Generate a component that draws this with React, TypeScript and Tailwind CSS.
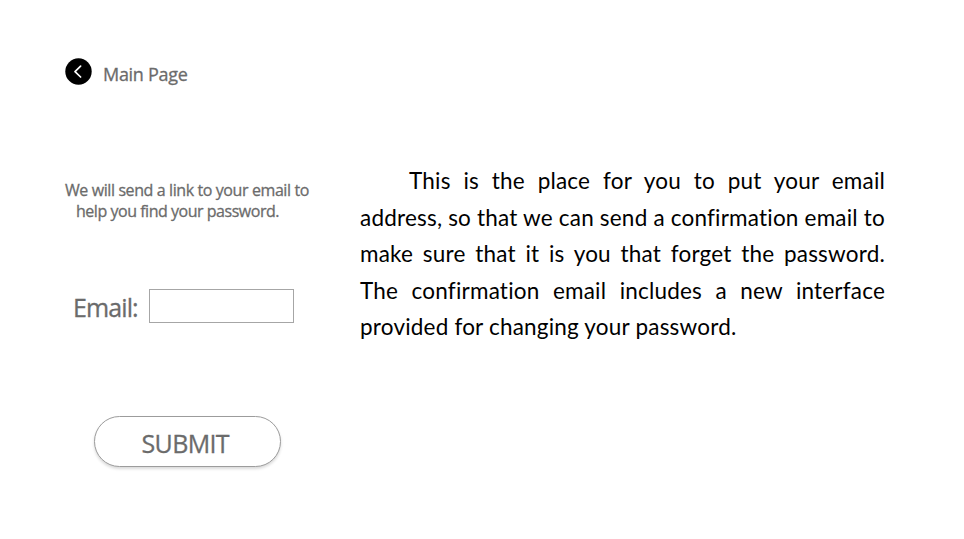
import React from "react";

const Line = ({ children, className = "" }: { children: React.ReactNode; className?: string }) => (
  <span className={`block whitespace-nowrap [text-align-last:justify] ${className}`}>{children}</span>
);

export default function App() {
  return (
    <main className="flex h-[539px] w-[964px] overflow-hidden bg-white">
      <section className="w-[360px] shrink-0 pt-[58px] font-['Open_Sans','Noto_Sans',sans-serif] text-[#6b6b6b] [-webkit-text-stroke:0.3px_#6b6b6b]">
        <a className="flex h-[27px] items-start pl-[65px]">
          <svg width="27" height="27" viewBox="0 0 27 27" fill="none">
            <circle cx="13.5" cy="13.5" r="13.2" fill="#000" />
            <path d="M15.6 8.2 10 13.6 15.6 19" stroke="#fff" strokeWidth="1.7" strokeLinecap="round" strokeLinejoin="round" />
          </svg>
          <span className="ml-[11px] mt-[3px] whitespace-nowrap text-[18px] leading-[26px] tracking-[-0.3px]">Main Page</span>
        </a>
        <p className="mt-[95px] text-[16px] leading-[21px]">
          <span className="ml-[65px] block whitespace-nowrap tracking-[-0.4px]">We will send a link to your email to</span>
          <span className="ml-[76px] block whitespace-nowrap tracking-[-0.47px]">help you find your password.</span>
        </p>
        <label className="mt-[67px] flex h-[34px] items-start pl-[73px]">
          <span className="w-[76px] whitespace-nowrap text-[25px] leading-[36px] tracking-[-0.9px]">Email:</span>
          <input className="h-[34px] w-[145px] border border-[#a6a6a6] bg-white outline-none" />
        </label>
        <button className="ml-[93.5px] mt-[93px] flex h-[51px] w-[187.5px] items-center rounded-full border border-[#9c9c9c] bg-white pl-[47px] shadow-[0_2px_3px_rgba(0,0,0,0.15)]">
          <span className="mt-[3px] whitespace-nowrap text-[25px] leading-[34px] tracking-[-0.65px]">SUBMIT</span>
        </button>
      </section>
      <p className="mt-[163px] w-[525px] font-['Lato','Open_Sans',sans-serif] text-[22.5px] leading-[36.5px] tracking-[0.2px] text-black [font-variant-ligatures:none]">
        <Line className="pl-[49px]">This is the place for you to put your email</Line>
        <Line>address, so that we can send a confirmation email to</Line>
        <Line>make sure that it is you that forget the password.</Line>
        <Line>The confirmation email includes a new interface</Line>
        <span className="block whitespace-nowrap">provided for changing your password.</span>
      </p>
    </main>
  );
}
